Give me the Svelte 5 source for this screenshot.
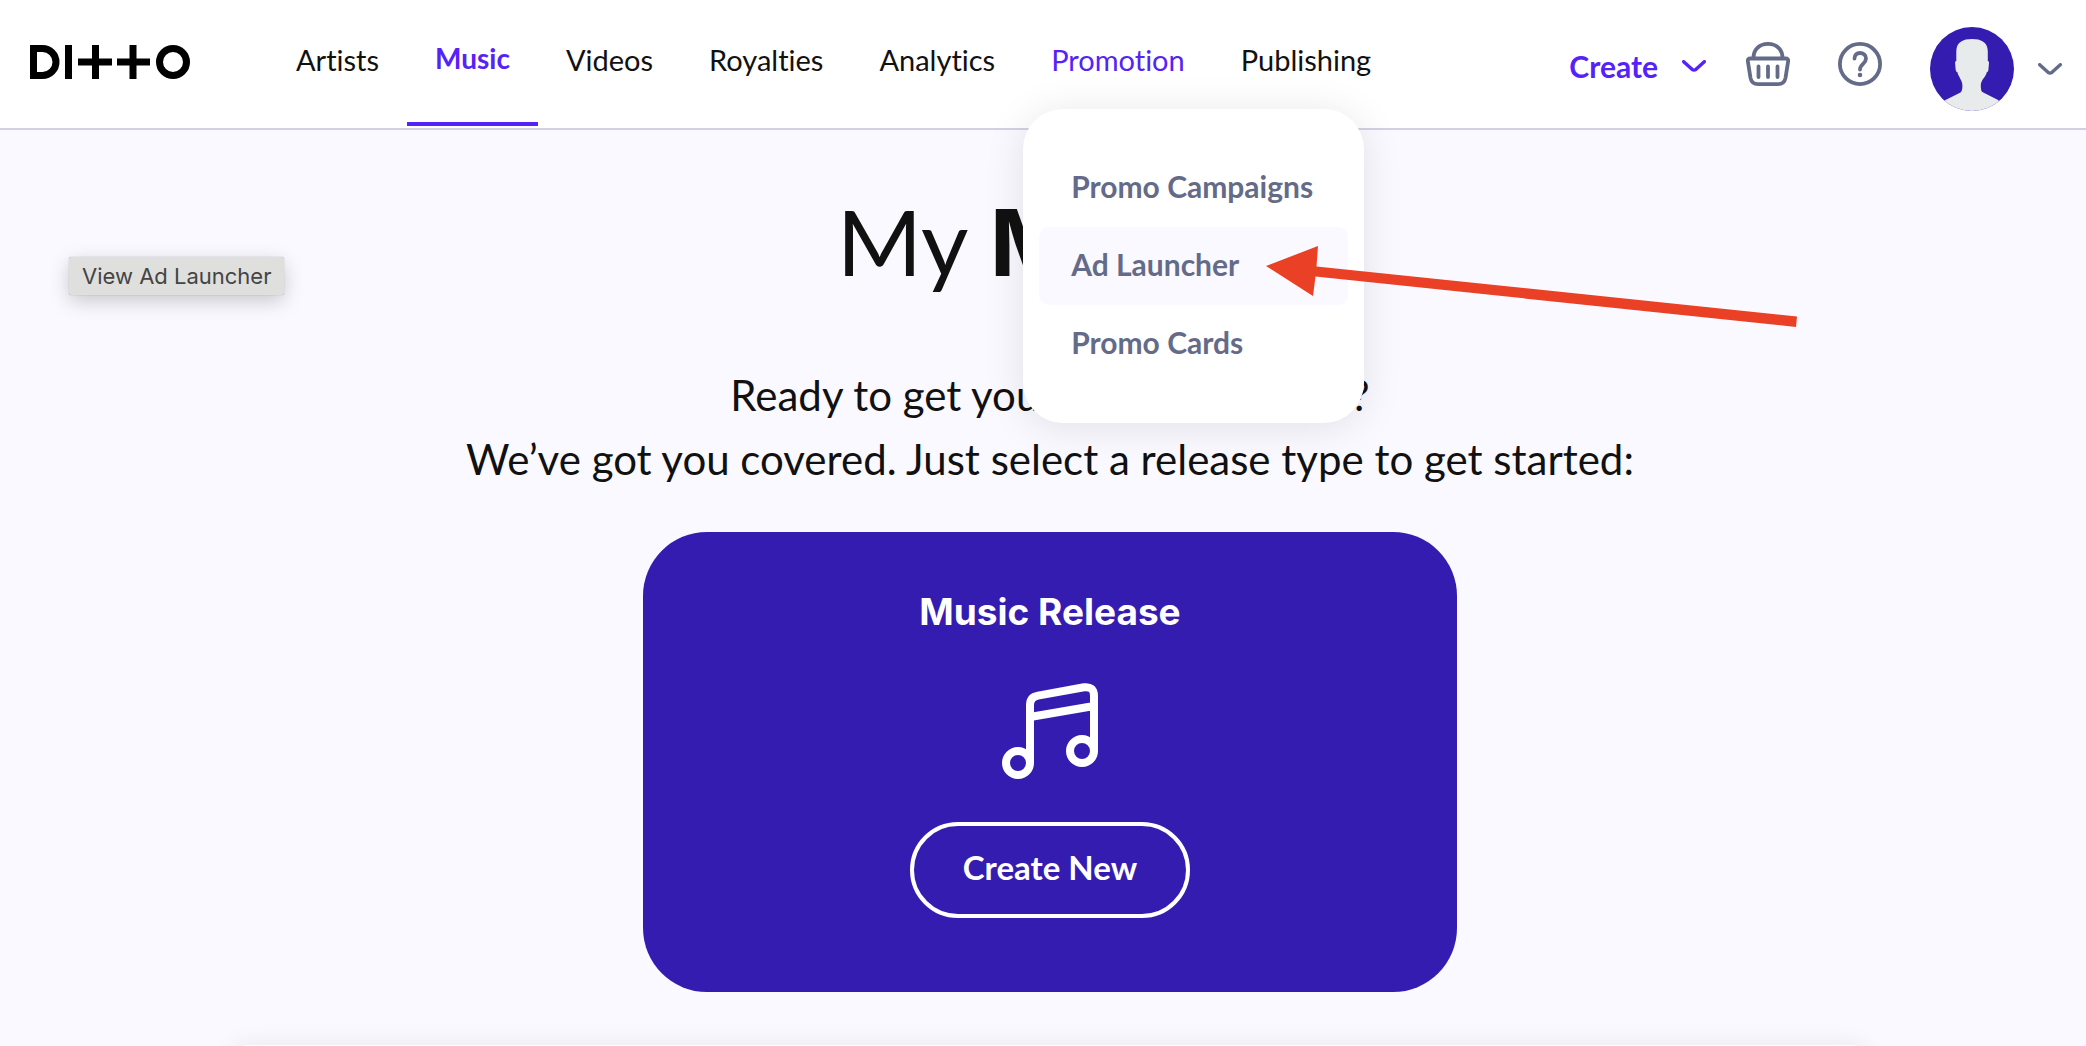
<script lang="ts">
  type NavItem = { label: string; href: string; active?: boolean; open?: boolean };

  const navItems: NavItem[] = [
    { label: 'Artists', href: '#artists' },
    { label: 'Music', href: '#music', active: true },
    { label: 'Videos', href: '#videos' },
    { label: 'Royalties', href: '#royalties' },
    { label: 'Analytics', href: '#analytics' },
    { label: 'Promotion', href: '#promotion', open: true },
    { label: 'Publishing', href: '#publishing' }
  ];

  const promoLinks: string[] = ['Promo Campaigns', 'Ad Launcher', 'Promo Cards'];
  let hovered: string = 'Ad Launcher';
</script>

<header class="topbar">
  <a class="logo" href="#home" aria-label="Ditto">
    <svg width="160" height="34" viewBox="0 0 160 34" fill="none" stroke="#000" stroke-width="7">
      <path d="M3.5 3.5h9a13.5 13.5 0 0 1 0 27h-9z" />
      <path d="M38.500 0v34M48 17h34M65.500 0v34M87 17h33M103 0v34" />
      <circle cx="143" cy="17" r="13.500" />
    </svg>
  </a>

  <nav class="nav">
    {#each navItems as item}
      <div class="nav-item">
        <a class="nav-link" class:active={item.active} class:open={item.open} href={item.href}>{item.label}</a>
        {#if item.open}
          <div class="menu">
            {#each promoLinks as link}
              <a class="menu-link" class:hovered={hovered === link} href="#promo" on:mouseenter={() => (hovered = link)}>{link}</a>
            {/each}
            <svg class="arrow" width="532" height="82" viewBox="0 0 532 82" fill="#ea4025">
              <path d="M0 20 52 0 50.500 20.500 531 70.500 530 81 49.500 30.500 47 50z" />
            </svg>
          </div>
        {/if}
      </div>
    {/each}
  </nav>

  <div class="tools">
    <button class="create">
      Create
      <svg width="24" height="12" viewBox="0 0 24 12" fill="none" stroke="currentColor" stroke-width="3.400" stroke-linecap="round" stroke-linejoin="round">
        <path d="M1.700 1.700 10 9.300q2 1.500 4 0l8.300-7.600" />
      </svg>
    </button>
    <button class="icon-button" aria-label="Basket">
      <svg width="44" height="44" viewBox="0 0 44 44" fill="none" stroke="currentColor" stroke-width="3.800" stroke-linecap="round" stroke-linejoin="round">
        <path d="M7.500 16C7.500 8 13 1.900 22 1.900S36.500 8 36.500 16" />
        <path d="M4.500 16.500h35q3.200 0 2.600 3L39.500 36q-1.200 6.100-7.500 6.100H12q-6.300 0-7.500-6.100L1.900 19.500q-.6-3 2.600-3z" />
        <path d="M12.500 24.500v10.500M22 24.500v10.500M31.500 24.500v10.500" />
      </svg>
    </button>
    <button class="icon-button" aria-label="Help">
      <svg width="44" height="44" viewBox="0 0 44 44" fill="none" stroke="currentColor" stroke-width="3.800" stroke-linecap="round" stroke-linejoin="round">
        <circle cx="22" cy="22" r="20.100" />
        <path d="M16.500 16.500c0-3.500 2.200-5.500 5.500-5.500s6 2.300 6 5.400c0 5.400-6 5.400-6 11.200" />
        <circle cx="22" cy="33" r="2.300" fill="currentColor" stroke="none" />
      </svg>
    </button>
    <button class="account" aria-label="Account">
      <svg class="avatar" width="84" height="84" viewBox="0 0 84 84">
        <rect width="84" height="84" fill="#351cb1" />
        <path fill="#e8ebec" d="M42 12c9 0 15.500 3 15.800 12v10q1.400 0 1.200 2l-.6 7q-.2 2-1.600 2.200c-1 5-6 7.500-6 13.300q0 5.500 1.500 6.500l16.300 8.300V84H15V73.300l15.500-7.800q2-1.500 1.900-7c0-5.500-4-8.500-5-13.300q-1.500-.2-1.700-2.200l-.6-7q-.2-2 1.200-2V24c.3-9 6.700-12 15.700-12z" />
      </svg>
      <svg width="24" height="12" viewBox="0 0 24 12" fill="none" stroke="currentColor" stroke-width="3.400" stroke-linecap="round" stroke-linejoin="round">
        <path d="M1.700 1.700 10 9.300q2 1.500 4 0l8.300-7.600" />
      </svg>
    </button>
  </div>
</header>

<main>
  <div class="tooltip" role="tooltip">View Ad Launcher</div>

  <h1>My <strong>Music</strong></h1>
  <p class="intro">
    Ready to get your music out there?<br />
    We’ve got you covered. Just select a release type to get started:
  </p>

  <section class="card">
    <h2>Music Release</h2>
    <svg width="96" height="96" viewBox="0 0 96 96" fill="none" stroke="#fff" stroke-width="8">
      <circle cx="16" cy="80" r="12" />
      <circle cx="80" cy="68" r="12" />
      <path d="M28 80V22q0-8 8-9.400L82 4.300Q92 3 92 13v55M28 34l64-11" />
    </svg>
    <button class="create-new">Create New</button>
  </section>

  <section class="releases"></section>
</main>

<style>
  :global(body) {
    margin: 0;
    overflow: hidden;
    background: #faf9ff;
    font-family: Lato, 'Liberation Sans', sans-serif;
    font-variant-ligatures: none;
    color: #111;
  }

  :global(*) {
    box-sizing: border-box;
  }

  a {
    color: inherit;
    text-decoration: none;
  }

  button {
    font: inherit;
    background: none;
    border: none;
    padding: 0;
    cursor: pointer;
  }

  svg {
    display: block;
    flex: none;
  }

  .topbar {
    display: flex;
    height: 130px;
    padding: 0 24px 0 30px;
    background: #fff;
    border-bottom: 2px solid #d4d0e4;
  }

  .logo {
    padding-top: 45px;
    margin-right: 78px;
  }

  .nav {
    display: flex;
    flex: 1;
  }

  .nav-item {
    position: relative;
  }

  .nav-link {
    display: block;
    height: 126px;
    padding: 0 28px;
    font-size: 29px;
    line-height: 120px;
  }

  .nav-link.active {
    color: #5522fa;
    font-size: 28px;
    font-weight: 700;
    line-height: 116px;
    border-bottom: 4px solid #5522fa;
  }

  .nav-link.open {
    color: #5522fa;
  }

  /* Dropdown hanging under the open nav item */
  .menu {
    position: absolute;
    z-index: 2;
    top: 109px;
    left: 0;
    width: 341px;
    padding: 40px 16px;
    background: #fff;
    border-radius: 40px;
    box-shadow: 0 4px 40px rgba(0, 0, 0, 0.1);
  }

  .menu-link {
    display: block;
    padding: 0 32px 4px;
    border-radius: 10px;
    font-size: 30px;
    font-weight: 700;
    line-height: 74px;
    white-space: nowrap;
    color: #646b88;
  }

  .menu-link.hovered {
    background: #faf9ff;
  }

  .arrow {
    position: absolute;
    top: 137px;
    left: 243px;
    pointer-events: none;
  }

  .tools {
    display: flex;
    align-items: flex-start;
    color: #646b88;
  }

  .create {
    display: flex;
    align-items: center;
    gap: 24px;
    height: 131px;
    margin-right: 40px;
    font-size: 30px;
    font-weight: 700;
    color: #5522fa;
  }

  .icon-button {
    margin: 42px 48px 0 0;
    color: inherit;
  }

  .account {
    display: flex;
    align-items: center;
    gap: 24px;
    margin-top: 27px;
    color: inherit;
  }

  .avatar {
    border-radius: 50%;
  }

  main {
    position: relative;
    display: flex;
    flex-direction: column;
    align-items: center;
    padding: 49px 0 0 14px;
  }

  .tooltip {
    position: absolute;
    top: 127px;
    left: 69px;
    padding: 1px 13px 0;
    font-family: Inter, 'Liberation Sans', sans-serif;
    font-size: 22px;
    line-height: 37px;
    color: #444;
    background: #dfdfdd;
    border-radius: 2px;
    box-shadow: 0 0 1px rgba(0, 0, 0, 0.4), 0 6px 20px rgba(0, 0, 0, 0.2);
  }

  h1 {
    margin: 0;
    font-size: 92px;
    font-weight: 400;
    line-height: 124px;
  }

  h1 strong {
    font-family: Inter, 'Liberation Sans', sans-serif;
    font-weight: 700;
  }

  .intro {
    margin: 58px 0 41px;
    font-size: 42px;
    line-height: 64px;
    text-align: center;
  }

  .card {
    display: flex;
    flex-direction: column;
    align-items: center;
    width: 100%;
    max-width: 814px;
    padding: 52px 40px 74px;
    color: #fff;
    background: #351cb1;
    border-radius: 64px;
  }

  h2 {
    margin: 0 0 43px;
    font-family: Inter, 'Liberation Sans', sans-serif;
    font-size: 37px;
    font-weight: 700;
    line-height: 56px;
  }

  .create-new {
    height: 96px;
    margin-top: 43px;
    padding: 0 49px 6px;
    font-size: 33px;
    font-weight: 700;
    color: #fff;
    border: 4px solid #fff;
    border-radius: 48px;
  }

  .releases {
    width: 79%;
    height: 200px;
    margin-top: 53px;
    background: #fff;
    border-radius: 16px;
    box-shadow: 0 0 24px rgba(0, 0, 0, 0.08);
  }
</style>
